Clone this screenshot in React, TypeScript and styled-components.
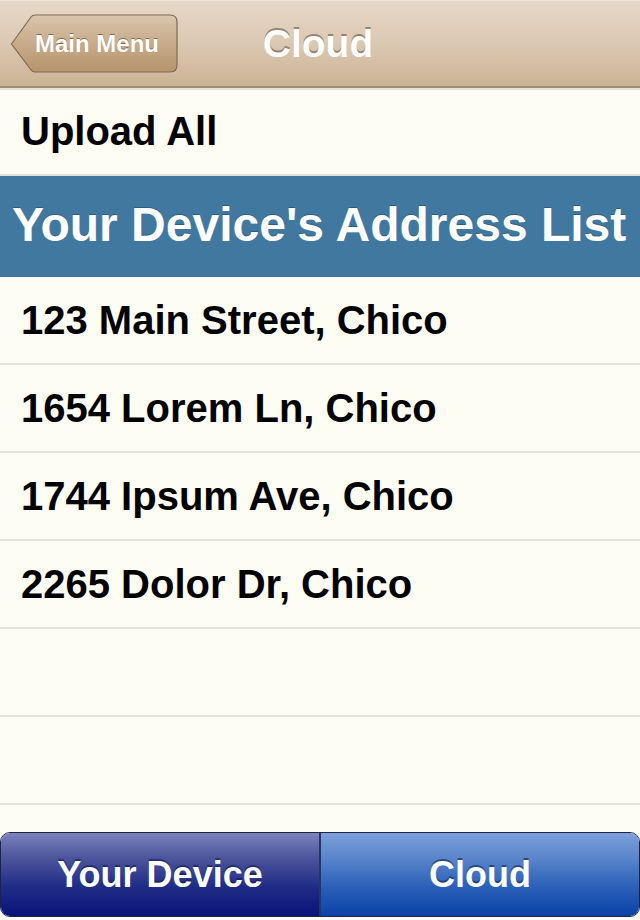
import React, { useState } from 'react'
import styled, { createGlobalStyle } from 'styled-components'

const GlobalStyle = createGlobalStyle`
  html, body {
    margin: 0;
    padding: 0;
    background: #fdfdf3;
  }
  body {
    font-family: 'Liberation Sans', Arial, Helvetica, sans-serif;
  }
`

const Screen = styled.div`
  width: 640px;
  height: 920px;
  display: flex;
  flex-direction: column;
  background: #fdfdf3;
  overflow: hidden;
`

const NavBar = styled.div`
  position: relative;
  height: 85px;
  flex-shrink: 0;
  display: flex;
  align-items: center;
  justify-content: center;
  background: linear-gradient(to bottom, #e6d8c8 0%, #dbc8b2 50%, #ccb394 100%);
  border-top: 1px solid #efe6da;
  border-bottom: 2px solid #a08a72;
  box-shadow: 0 2px 0 #e4e2da;
`

const NavTitle = styled.div`
  color: #ffffff;
  font-size: 39px;
  font-weight: 700;
  text-shadow: 0 -2px 0 rgba(90, 70, 50, 0.55);
  margin-left: -4px;
`

const BackButton = styled.button`
  position: absolute;
  left: 10px;
  top: 13px;
  width: 168px;
  height: 59px;
  padding: 0 0 0 25px;
  border: none;
  background: none;
  cursor: pointer;
  display: flex;
  align-items: center;
  font-family: inherit;

  svg {
    position: absolute;
    inset: 0;
  }
`

const BackLabel = styled.span`
  position: relative;
  color: #ffffff;
  font-size: 24px;
  font-weight: 700;
  text-shadow: 0 -1px 0 rgba(80, 60, 40, 0.6);
`

const Content = styled.div`
  flex: 1;
  overflow: hidden;
`

const Row = styled.div`
  height: 86px;
  display: flex;
  align-items: center;
  padding-left: 21px;
  border-bottom: 2px solid #e1e0da;
  font-size: 40px;
  font-weight: 700;
  color: #000000;
`

const SectionHeader = styled.div`
  height: 101px;
  display: flex;
  align-items: center;
  padding: 0 0 4px 12px;
  box-sizing: border-box;
  background: #40789f;
  color: #ffffff;
  font-size: 48px;
  font-weight: 700;
  white-space: nowrap;
  text-shadow: 0 -1px 0 rgba(0, 0, 0, 0.25);
`

const Footer = styled.div`
  flex-shrink: 0;
  padding: 0 0 3px 0;
`

const Segmented = styled.div`
  height: 83px;
  display: flex;
  border: 1px solid #1d2440;
  border-radius: 10px;
  overflow: hidden;
`

const Segment = styled.button<{ $active: boolean; $first?: boolean }>`
  flex: 1;
  border: none;
  border-left: ${p => (p.$first ? 'none' : '2px solid #27365e')};
  font-family: inherit;
  font-size: 36px;
  font-weight: 700;
  color: #ffffff;
  text-shadow: 0 -2px 0 rgba(10, 20, 60, 0.5);
  cursor: pointer;
  background: ${p =>
    p.$active
      ? 'linear-gradient(to bottom, #7c82bb 0%, #4c559c 30%, #1f2c86 65%, #081479 100%)'
      : 'linear-gradient(to bottom, #7ca0da 0%, #5a86cb 30%, #2a60b8 65%, #0a43a6 100%)'};
`

const addresses = [
  '123 Main Street, Chico',
  '1654 Lorem Ln, Chico',
  '1744 Ipsum Ave, Chico',
  '2265 Dolor Dr, Chico',
  '',
  ''
]

const BackShape = () => (
  <svg width="168" height="59" viewBox="0 0 168 59">
    <defs>
      <linearGradient id="backGrad" x1="0" y1="0" x2="0" y2="1">
        <stop offset="0%" stopColor="#dac6ae" />
        <stop offset="50%" stopColor="#c8ab89" />
        <stop offset="100%" stopColor="#b6946d" />
      </linearGradient>
    </defs>
    <path
      d="M1.5 30 L21 3 Q22.5 1 25 1 H160 Q167 1 167 8 V51 Q167 58 160 58 H25 Q22.5 58 21 56 Z"
      fill="url(#backGrad)"
      stroke="#7f6a52"
      strokeWidth="1.2"
    />
  </svg>
)

const App: React.FC = () => {
  const [tab, setTab] = useState<'device' | 'cloud'>('device')

  return (
    <>
      <GlobalStyle />
      <Screen>
        <NavBar>
          <BackButton>
            <BackShape />
            <BackLabel>Main Menu</BackLabel>
          </BackButton>
          <NavTitle>Cloud</NavTitle>
        </NavBar>

        <Content>
          <Row>Upload All</Row>
          <SectionHeader>Your Device's Address List</SectionHeader>
          {addresses.map((address, i) => (
            <Row key={i}>{address}</Row>
          ))}
        </Content>

        <Footer>
          <Segmented>
            <Segment $first $active={tab === 'device'} onClick={() => setTab('device')}>
              Your Device
            </Segment>
            <Segment $active={tab === 'cloud'} onClick={() => setTab('cloud')}>
              Cloud
            </Segment>
          </Segmented>
        </Footer>
      </Screen>
    </>
  )
}

export default App
